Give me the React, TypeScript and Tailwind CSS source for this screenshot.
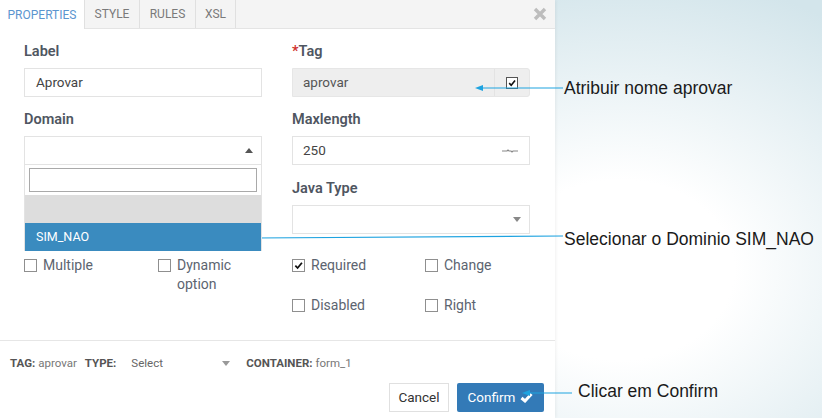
import React from "react";

const Caret = ({ up = false, color = "#666" }: { up?: boolean; color?: string }) => (
  <svg width="8" height="5" viewBox="0 0 8 5">
    {up ? <path d="M0 5 L4 0 L8 5 Z" fill={color} /> : <path d="M0 0 L4 5 L8 0 Z" fill={color} />}
  </svg>
);

const Check = ({ size = 9 }: { size?: number }) => (
  <svg width={size} height={size} viewBox="0 0 10 10">
    <path d="M1.5 5.2 L4 7.8 L8.8 2" stroke="#111" strokeWidth="2" fill="none" />
  </svg>
);

const Box = ({ checked = false }: { checked?: boolean }) => (
  <span className="mt-[3px] flex h-[13px] w-[13px] shrink-0 items-center justify-center border border-[#8f8f8f] bg-white">
    {checked && <Check />}
  </span>
);

const Cb = ({ label, checked = false }: { label: React.ReactNode; checked?: boolean }) => (
  <div className="flex items-start gap-[6px] text-[14px] leading-[19px] text-[#5c6470]">
    <Box checked={checked} />
    <span>{label}</span>
  </div>
);

const Label = ({ children }: { children: React.ReactNode }) => (
  <div className="mb-[8px] h-[17px] text-[14.5px] font-semibold leading-[17px] text-[#4f5661]">{children}</div>
);

export default function App() {
  return (
    <div className="relative flex h-[418px] w-[822px] overflow-hidden bg-[radial-gradient(ellipse_380px_300px_at_620px_270px,#ffffff_30%,#d3e5eb_100%)] font-['Roboto',sans-serif]">
      {/* dialog */}
      <div className="flex h-[418px] w-[555px] flex-col bg-white shadow-[1px_0_3px_rgba(0,0,0,0.06)]">
        {/* tabs */}
        <div className="flex h-[29px] items-stretch border-b border-[#e4e4e4] bg-[#f4f4f4] text-[12px]">
          <div className="-mb-px flex w-[85px] items-center justify-center border-r border-[#e0e0e0] bg-white text-[#5b95cf]">PROPERTIES</div>
          <div className="flex w-[55px] items-center justify-center border-r border-[#e0e0e0] text-[#7a7a7a]">STYLE</div>
          <div className="flex w-[56px] items-center justify-center border-r border-[#e0e0e0] text-[#7a7a7a]">RULES</div>
          <div className="flex w-[40px] items-center justify-center border-r border-[#e0e0e0] text-[#7a7a7a]">XSL</div>
          <div className="flex-1" />
          <div className="flex items-center pr-[8px]">
            <svg width="14" height="14" viewBox="0 0 14 14">
              <path d="M2 2 L12 12 M12 2 L2 12" stroke="#bdbdbd" strokeWidth="3.4" />
            </svg>
          </div>
        </div>

        {/* body */}
        <div className="h-[312px] border-b border-[#e6e6e6] px-6 pt-[14px]">
          <div className="grid grid-cols-[238px_238px] gap-x-[30px]">
            {/* column 1 */}
            <div className="flex flex-col">
              <Label>Label</Label>
              <div className="flex h-[29px] items-center border border-[#e3e3e3] px-[11px] text-[13.5px] text-[#444]">Aprovar</div>
              <div className="mt-[14px]">
                <Label>Domain</Label>
              </div>
              <div className="relative">
                <div className="flex h-[29px] items-center justify-end border border-[#e3e3e3] pr-[8px]">
                  <Caret up color="#555" />
                </div>
                <div className="absolute left-0 right-0 top-[29px] z-10 flex flex-col border-x border-[#e3e3e3] bg-white">
                  <div className="px-[4px] pt-[3px] pb-[3px]">
                    <div className="h-[24px] border border-[#a9a9a9] bg-white" />
                  </div>
                  <div className="h-[28px] bg-[#dddddd]" />
                  <div className="flex h-[28px] items-center bg-[#3a8bbf] px-[11px] text-[12.5px] text-white">SIM_NAO</div>
                </div>
              </div>
            </div>
            {/* column 2 */}
            <div className="flex flex-col">
              <Label>
                <span className="text-[#d0312d]">*</span>Tag
              </Label>
              <div className="flex h-[29px] items-stretch rounded-r-[3px] border border-[#e6e6e6] bg-[#eeeeee] text-[13.5px] text-[#555]">
                <div className="flex flex-1 items-center px-[10px]">aprovar</div>
                <div className="flex w-[35px] items-center justify-center border-l border-[#e3e3e3]">
                  <span className="flex h-[12px] w-[12px] items-center justify-center border border-[#555] bg-white">
                    <Check size={8} />
                  </span>
                </div>
              </div>
              <div className="mt-[14px]">
                <Label>Maxlength</Label>
              </div>
              <div className="flex h-[29px] items-center justify-between border border-[#e3e3e3] pl-[10px] pr-[11px] text-[13.5px] text-[#444]">
                <span>250</span>
                <svg width="16" height="4" viewBox="0 0 16 4">
                  <path d="M0 2 H5 L6 1 L7 2 H9 L10 3 L11 2 H16" stroke="#888" strokeWidth="1.2" fill="none" />
                </svg>
              </div>
              <div className="mt-[15px]">
                <Label>Java Type</Label>
              </div>
              <div className="flex h-[29px] items-center justify-end border border-[#e3e3e3] pr-[8px]">
                <Caret color="#888" />
              </div>
            </div>
          </div>

          {/* checkboxes */}
          <div className="mt-[22px] grid grid-cols-[238px_238px] gap-x-[30px]">
            <div className="grid grid-cols-[134px_104px]">
              <Cb label="Multiple" />
              <Cb
                label={
                  <>
                    Dynamic
                    <br />
                    option
                  </>
                }
              />
            </div>
            <div className="grid grid-cols-[133px_105px] gap-y-[21px]">
              <Cb label="Required" checked />
              <Cb label="Change" />
              <Cb label="Disabled" />
              <Cb label="Right" />
            </div>
          </div>
        </div>

        {/* footer */}
        <div className="flex flex-col pl-[10px] pr-[11px] pt-[15px]">
          <div className="flex items-center text-[11.5px] leading-[14px] text-[#555]">
            <span className="font-bold">TAG:</span>
            <span className="ml-[3px] text-[#777]">aprovar</span>
            <span className="ml-[8px] font-bold">TYPE:</span>
            <span className="ml-[15px] w-[91px] text-[#666]">Select</span>
            <Caret color="#999" />
            <span className="ml-[16px] font-bold">CONTAINER:</span>
            <span className="ml-[3px] text-[#777]">form_1</span>
          </div>
          <div className="mt-[13px] flex justify-end gap-[8px]">
            <button className="h-[29px] w-[60px] border border-[#e0e0e0] bg-white text-[13.5px] text-[#333]">Cancel</button>
            <button className="flex h-[29px] w-[87px] items-center justify-center gap-[5px] rounded-[2px] bg-[#337ab7] text-[13.5px] text-white">
              Confirm
              <svg width="13" height="11" viewBox="0 0 13 11">
                <path d="M1.5 6 L5 9 L11.5 2" stroke="#fff" strokeWidth="3" fill="none" />
              </svg>
            </button>
          </div>
        </div>
      </div>

      {/* annotations overlay */}
      <svg className="pointer-events-none absolute left-0 top-0" width="822" height="418" viewBox="0 0 822 418">
        <g stroke="#1ea3e0" strokeWidth="1.2" fill="#1ea3e0">
          <line x1="480" y1="88" x2="563" y2="88" />
          <path d="M475 88 L483 85 L483 91 Z" stroke="none" />
          <line x1="252" y1="238" x2="563" y2="236" />
          <path d="M247 238 L255 235 L255 241 Z" stroke="none" />
          <line x1="527" y1="393" x2="572" y2="393" />
          <path d="M522 393 L530 390 L530 396 Z" stroke="none" />
        </g>
      </svg>
      <div className="pointer-events-none absolute left-[564px] top-[78px] font-['Liberation_Sans',Arial,sans-serif] text-[17.5px] leading-[20px] text-[#1a1a1a]">Atribuir nome aprovar</div>
      <div className="pointer-events-none absolute left-[564px] top-[229px] font-['Liberation_Sans',Arial,sans-serif] text-[17.5px] leading-[20px] text-[#1a1a1a]">Selecionar o Dominio SIM_NAO</div>
      <div className="pointer-events-none absolute left-[578px] top-[381px] font-['Liberation_Sans',Arial,sans-serif] text-[17.5px] leading-[20px] text-[#1a1a1a]">Clicar em Confirm</div>
    </div>
  );
}
